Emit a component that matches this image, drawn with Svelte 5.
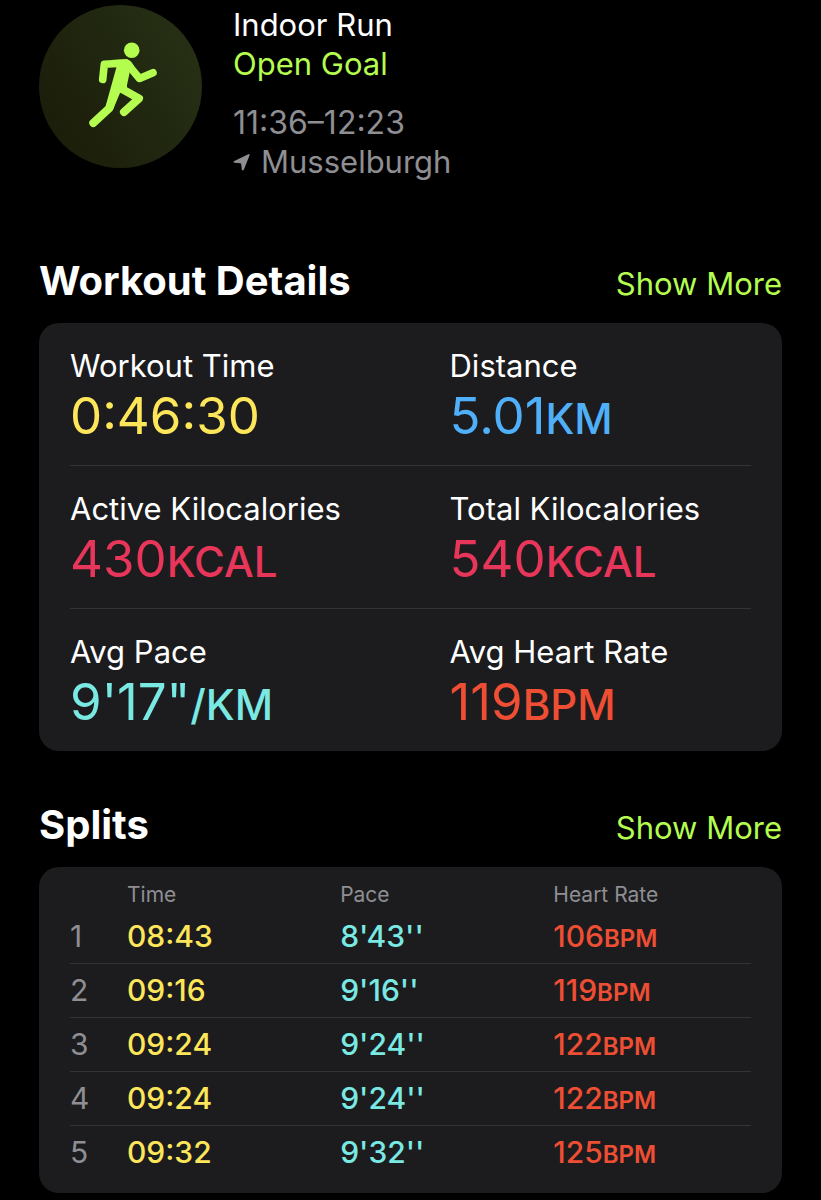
<script lang="ts">
	type Metric = {
		label: string;
		value: string;
		unit?: string;
		tone: string;
	};

	type Split = {
		time: string;
		pace: string;
		heartRate: number;
	};

	const metrics: Metric[] = [
		{ label: 'Workout Time', value: '0:46:30', tone: 'time' },
		{ label: 'Distance', value: '5.01', unit: 'KM', tone: 'distance' },
		{ label: 'Active Kilocalories', value: '430', unit: 'KCAL', tone: 'energy' },
		{ label: 'Total Kilocalories', value: '540', unit: 'KCAL', tone: 'energy' },
		{ label: 'Avg Pace', value: `9'17"`, unit: '/KM', tone: 'pace' },
		{ label: 'Avg Heart Rate', value: '119', unit: 'BPM', tone: 'heart' }
	];

	const splits: Split[] = [
		{ time: '08:43', pace: `8'43''`, heartRate: 106 },
		{ time: '09:16', pace: `9'16''`, heartRate: 119 },
		{ time: '09:24', pace: `9'24''`, heartRate: 122 },
		{ time: '09:24', pace: `9'24''`, heartRate: 122 },
		{ time: '09:32', pace: `9'32''`, heartRate: 125 }
	];
</script>

<main>
	<header class="summary">
		<div class="badge">
			<svg viewBox="0 0 163 163" aria-hidden="true">
				<g fill="none" stroke="currentColor" stroke-linecap="round" stroke-linejoin="round">
					<path stroke-width="7.6" d="M63.700 74.500 L65.300 59.300 L87 58" />
					<path stroke-width="7.6" d="M88 58.500 L100.500 73.500 L114 67.800" />
					<path stroke-width="8" d="M82 83.500 L100 93.500 L85 107" />
					<path stroke-width="8" d="M54.300 118 L70.500 103 L77 84" />
				</g>
				<path
					fill="currentColor"
					d="M72 55 L87 54.200 Q92 55 95 61 L91 66 L88 80 L88 84 L81 88 L74.200 104 L66.500 101.500 L77.500 62 Z"
				/>
				<circle cx="92.700" cy="45.300" r="7.800" fill="currentColor" />
			</svg>
		</div>
		<div class="info">
			<h1>Indoor Run</h1>
			<p class="goal">Open Goal</p>
			<p class="when">11:36–12:23</p>
			<p class="where">
				<svg viewBox="0 0 18 18" aria-hidden="true">
					<path
						d="M.800 8.300 L15.300 1.200 Q17 .800 16.500 2.400 L10.800 16.800 Q9.800 18 8.800 16.800 L8.200 11 L7.500 10.300 L1.300 9.800 Q0 9.200 .800 8.300 Z"
						fill="currentColor"
					/>
				</svg>
				Musselburgh
			</p>
		</div>
	</header>

	<section>
		<div class="heading">
			<h2>Workout Details</h2>
			<button type="button">Show More</button>
		</div>
		<dl class="card metrics">
			{#each metrics as metric}
				<div class="metric">
					<dt>{metric.label}</dt>
					<dd class={metric.tone}>
						{metric.value}{#if metric.unit}<span class="unit">{metric.unit}</span>{/if}
					</dd>
				</div>
			{/each}
		</dl>
	</section>

	<section>
		<div class="heading">
			<h2>Splits</h2>
			<button type="button">Show More</button>
		</div>
		<div class="card splits">
			<table>
				<thead>
					<tr>
						<td class="index"></td>
						<th scope="col" class="wide">Time</th>
						<th scope="col" class="wide">Pace</th>
						<th scope="col">Heart Rate</th>
					</tr>
				</thead>
				<tbody>
					{#each splits as split, i}
						<tr>
							<th scope="row">{i + 1}</th>
							<td class="time">{split.time}</td>
							<td class="pace">{split.pace}</td>
							<td class="heart">{split.heartRate}<span class="unit">BPM</span></td>
						</tr>
					{/each}
				</tbody>
			</table>
		</div>
	</section>
</main>

<style>
	:global(body) {
		margin: 0;
		background: #000;
	}

	main {
		padding: 5px 39px 7px;
		font-family: Inter, 'Liberation Sans', sans-serif;
		font-size: 31px;
		color: #fff;
	}

	h1,
	h2,
	p,
	dl,
	dd {
		margin: 0;
	}

	.summary {
		display: flex;
		gap: 31px;
	}

	.badge {
		flex: none;
		width: 163px;
		height: 163px;
		border-radius: 50%;
		background: linear-gradient(60deg, #1a1b08, #20260f 50%, #283316);
		color: #b4fc4f;
	}

	.badge svg {
		display: block;
	}

	.info {
		line-height: 39px;
	}

	h1 {
		font-size: 31px;
		font-weight: 400;
	}

	.goal,
	button {
		color: #b4fc4f;
	}

	.when,
	.where {
		color: #8e8e93;
	}

	.when {
		margin-top: 20px;
		font-size: 32px;
	}

	.where {
		display: flex;
		align-items: center;
		gap: 10px;
	}

	.where svg {
		width: 18px;
		height: 18px;
	}

	section {
		margin-top: 50px;
	}

	.summary + section {
		margin-top: 76px;
	}

	.heading {
		display: flex;
		justify-content: space-between;
		align-items: baseline;
		margin-bottom: 18px;
	}

	h2 {
		font-size: 40px;
		font-weight: 700;
		line-height: 48px;
	}

	button {
		padding: 0;
		border: 0;
		background: none;
		font: inherit;
		line-height: 38px;
		cursor: pointer;
	}

	.card {
		border-radius: 20px;
		background: #1c1c1e;
	}

	.metrics {
		display: grid;
		grid-template-columns: 1fr 1fr;
		padding: 0 31px;
	}

	.metric {
		padding: 24px 0 18px;
		border-bottom: 1px solid #333335;
	}

	.metric:nth-child(even) {
		padding-left: 39px;
	}

	.metric:nth-last-child(-n + 2) {
		border-bottom: 0;
	}

	dt {
		line-height: 38px;
	}

	dd {
		font-size: 51px;
		line-height: 62px;
	}

	.unit {
		line-height: 1;
		font-weight: 500;
	}

	dd .unit {
		font-size: 42px;
	}

	.splits {
		padding: 13px 31px 14px;
	}

	table {
		width: 100%;
		border-collapse: collapse;
		table-layout: fixed;
	}

	th,
	td {
		padding: 0;
		text-align: left;
		font-weight: 400;
	}

	.index {
		width: 57px;
	}

	.wide {
		width: 31.3%;
	}

	thead th {
		height: 30px;
		font-size: 21px;
		line-height: 30px;
		color: #8e8e93;
	}

	tbody th,
	tbody td {
		height: 53px;
		font-size: 30px;
		line-height: 53px;
	}

	tbody th {
		color: #8e8e93;
	}

	tbody td {
		font-weight: 500;
	}

	tbody tr:not(:last-child) {
		border-bottom: 1px solid #333335;
	}

	td .unit {
		font-size: 24px;
		font-weight: 600;
	}

	.time {
		color: #fde65a;
	}

	.distance {
		color: #4fb0f9;
	}

	.energy {
		color: #e8355a;
	}

	.pace {
		color: #7ae9e3;
	}

	.heart {
		color: #ee4e33;
	}
</style>
